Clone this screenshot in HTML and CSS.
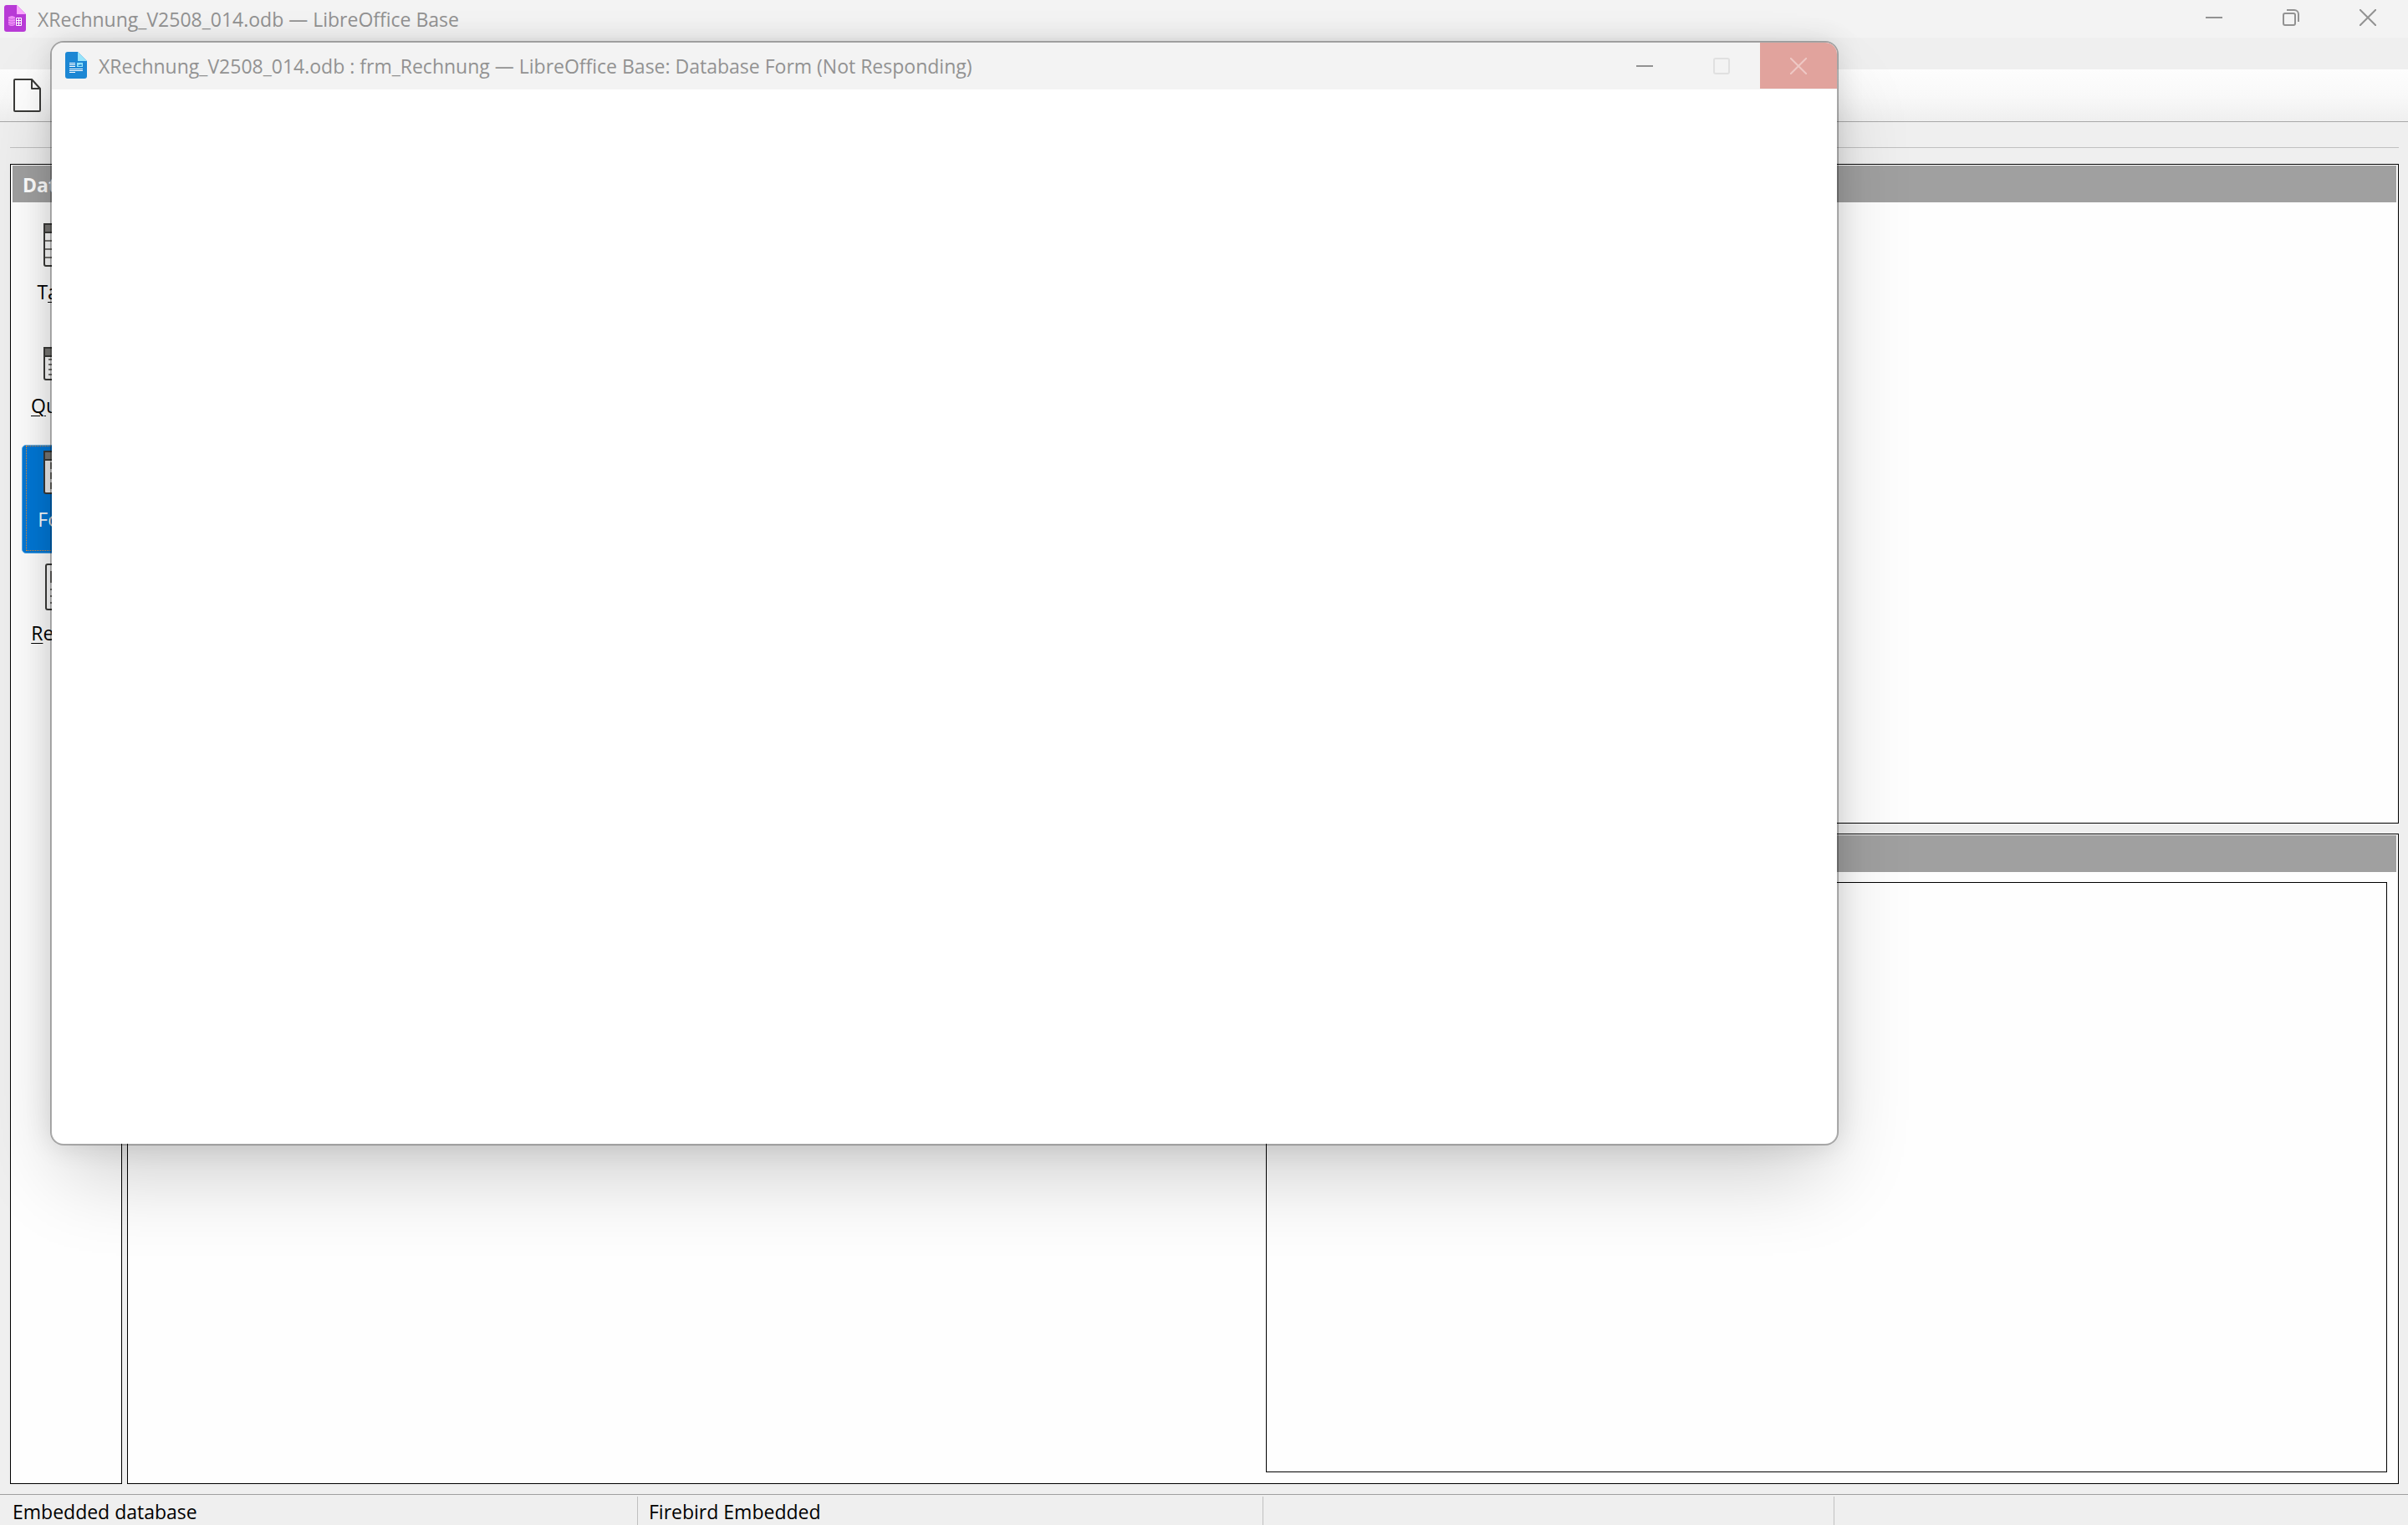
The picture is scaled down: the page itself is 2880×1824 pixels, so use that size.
FILE: index.html
```html
<!DOCTYPE html>
<html lang="en">
<head>
<meta charset="utf-8">
<title>XRechnung_V2508_014.odb — LibreOffice Base</title>
<link rel="stylesheet" href="styles.css">
</head>
<body>
<div class="app">
  <header class="titlebar">
    <svg class="doc-icon" viewBox="0 0 26 32" aria-hidden="true">
      <path fill="#b83ad6" d="M3 0h12l11 11v18a3 3 0 0 1-3 3H3a3 3 0 0 1-3-3V3a3 3 0 0 1 3-3z"/>
      <path fill="#fba6ff" d="M15 0l11 11H15z"/>
      <path fill="#f18cf8" d="M5 14.500q4.500-3 8 0v9q-4 3-8 0z"/>
      <path fill="none" stroke="#c95fe0" d="M5 16.500q4 1.500 8 0M5 19.500q4 1.500 8 0M5 22.500q4 1.500 8 0"/>
      <path fill="none" stroke="#fff" d="M14.500 15.500h6v9h-6zM17.500 15.500v9M14.500 18.500h6M14.500 21.500h6"/>
    </svg>
    <h1 class="title">XRechnung_V2508_014.odb — LibreOffice Base</h1>
    <div class="controls">
      <button class="control" type="button" aria-label="Minimize"><svg viewBox="0 0 20 20"><path d="M0 10h20"/></svg></button>
      <button class="control" type="button" aria-label="Restore"><svg viewBox="0 0 20 20"><rect x="1" y="5" width="14" height="14" rx="2"/><path d="M5 1h9a5 5 0 0 1 5 5v9"/></svg></button>
      <button class="control" type="button" aria-label="Close"><svg viewBox="0 0 20 20"><path d="M0 0l20 20M20 0L0 20"/></svg></button>
    </div>
  </header>
  <div class="menubar"></div>
  <div class="toolbar">
    <button class="tool" type="button" aria-label="New">
      <svg viewBox="0 0 33 40"><path fill="#fdfdfd" stroke="#3a3a38" stroke-width="2" stroke-linejoin="round" d="M2 1h20l10 11v26a1 1 0 0 1-1 1H2a1 1 0 0 1-1-1V2a1 1 0 0 1 1-1zM22 1v11h10"/></svg>
    </button>
  </div>
  <hr class="rule">
  <main class="workspace">
    <nav class="panel sidebar" aria-label="Database">
      <h2 class="panel-head">Database</h2>
      <div class="objects">
        <button class="object" type="button"><span class="object-body">
          <svg class="object-icon" viewBox="0 0 54 52"><g fill="#fafafa" stroke="#3a3a38" stroke-width="2"><rect x="1" y="1" width="52" height="50" rx="2"/><path fill="#797774" d="M1 1h52v10H1z"/></g><path fill="none" stroke="#797774" stroke-width="2" d="M2 21h50M2 31h50M2 41h50M27 12v38"/></svg>
          <span class="object-label">T<u>a</u>bles</span></span></button>
        <button class="object" type="button"><span class="object-body">
          <svg class="object-icon" viewBox="0 0 54 52"><g fill="#fafafa" stroke="#3a3a38" stroke-width="2"><rect x="1" y="13" width="52" height="38" rx="2"/><path fill="#797774" d="M1 13h52v10H1z"/></g><path fill="none" stroke="#797774" stroke-width="2" d="M6 27h40M6 33h40M6 39h40M6 45h40"/></svg>
          <span class="object-label"><u>Q</u>ueries</span></span></button>
        <button class="object selected" type="button" aria-pressed="true"><span class="object-body">
          <svg class="object-icon" viewBox="0 0 54 52"><g fill="#ececec" stroke="#3a3a38" stroke-width="2"><rect x="1" y="1" width="52" height="50" rx="2"/><path fill="#797774" d="M1 1h52v10H1z"/></g><path fill="#797774" d="M8 14h12v8H8zM8 26h12v8H8zM8 38h12v8H8z"/></svg>
          <span class="object-label">Forms</span></span></button>
        <button class="object" type="button"><span class="object-body">
          <svg class="object-icon" viewBox="0 0 54 52"><rect x="3" y="0" width="48" height="54" rx="2" fill="#fafafa" stroke="#3a3a38" stroke-width="2"/><path fill="#797774" d="M8 8h12v14H8zM8 29h38v2H8zM8 37h38v2H8zM8 45h38v2H8z"/></svg>
          <span class="object-label"><u>R</u>eports</span></span></button>
      </div>
    </nav>
    <div class="content">
      <section class="panel tasks"><div class="panel-head"></div></section>
      <section class="panel forms">
        <div class="panel-head"></div>
        <div class="forms-body"><div class="preview"></div></div>
      </section>
    </div>
  </main>
  <footer class="statusbar">
    <span class="status status-kind">Embedded database</span>
    <span class="status status-engine">Firebird Embedded</span>
    <span class="status status-host"></span>
    <span class="status status-user"></span>
  </footer>

  <section class="form-window" role="dialog" aria-labelledby="form-title">
    <header class="form-titlebar">
      <svg class="doc-icon" viewBox="0 0 26 32" aria-hidden="true">
        <path fill="#1c87d4" d="M3 0h12l11 11v18a3 3 0 0 1-3 3H3a3 3 0 0 1-3-3V3a3 3 0 0 1 3-3z"/>
        <path fill="#96e4fb" d="M15 0l11 11H15z"/>
        <path fill="none" stroke="#fff" d="M5 13.500h7M5 15.500h7M5 17.500h7M5 20.500h16M5 22.500h16M5 24.500h7"/>
        <rect x="14" y="13" width="7" height="5" fill="#96e4fb"/>
        <path fill="#1c87d4" d="M15 17l2-2 1 1 1-2 1 3z"/>
      </svg>
      <h2 class="title" id="form-title">XRechnung_V2508_014.odb : frm_Rechnung — LibreOffice Base: Database Form (Not Responding)</h2>
      <div class="controls">
        <button class="control" type="button" aria-label="Minimize form"><svg viewBox="0 0 20 20"><path d="M0 10h20"/></svg></button>
        <button class="control" type="button" aria-label="Maximize form" disabled><svg viewBox="0 0 20 20"><rect x="1" y="1" width="18" height="18" rx="2"/></svg></button>
        <button class="control danger" type="button" aria-label="Close form"><svg viewBox="0 0 20 20"><path d="M0 0l20 20M20 0L0 20"/></svg></button>
      </div>
    </header>
  </section>
</div>
</body>
</html>
```
FILE: styles.css
```css
* {
  box-sizing: border-box;
}

body {
  margin: 0;
  background: #efefef;
  color: #000;
  font: 23px/32px "Open Sans", "Noto Sans", sans-serif;
}

button {
  padding: 0;
  border: 0;
  background: none;
  color: inherit;
  font: inherit;
}

.app {
  position: relative;
  display: flex;
  flex-direction: column;
  min-height: 100vh;
  overflow: hidden;
}

/* Title bars */
.titlebar,
.form-titlebar {
  display: flex;
  background: #f3f3f3;
  color: #929292;
}

.titlebar {
  height: 45px;
  padding: 0 2px 0 5px;
}

.doc-icon {
  flex: none;
  width: 26px;
  height: 32px;
  margin-top: 6px;
}

.title {
  flex: 1;
  margin: 7px 0 0 14px;
  font-size: 23px;
  font-weight: 400;
  line-height: 32px;
  white-space: nowrap;
}

.controls {
  display: flex;
}

.control {
  display: flex;
  align-items: center;
  justify-content: center;
  width: 92px;
  height: 42px;
}

.control svg {
  width: 20px;
  height: 20px;
  fill: none;
  stroke: #929292;
  stroke-width: 2;
}

.control:disabled svg {
  stroke: #e0e0e0;
}

/* Menu and toolbar */
.menubar {
  height: 38px;
}

.toolbar {
  height: 63px;
  padding: 11px 16px;
  border-bottom: 1px solid #a9a9a9;
  background: linear-gradient(#fdfdfd, #f9f9f9 50%, #efefef);
}

.tool {
  display: block;
  width: 33px;
  height: 40px;
}

.tool svg {
  display: block;
}

.rule {
  width: auto;
  height: 1px;
  margin: 30px 11px 0 12px;
  border: 0;
  background: #c0c0c0;
}

/* Panels */
.workspace {
  display: flex;
  flex: 1;
  gap: 6px;
  margin: 19px 11px 12px 12px;
}

.panel {
  display: flex;
  flex-direction: column;
  padding: 1px;
  border: 1px solid #000;
  background: #fefefe;
}

.panel-head {
  flex: none;
  height: 44px;
  margin: 0 1px;
  padding: 7px 12px;
  overflow: hidden;
  background: #a0a0a0;
  color: #fff;
  font-size: 23px;
  line-height: 32px;
}

.sidebar {
  flex: none;
  width: 134px;
}

.objects {
  display: flex;
  flex-direction: column;
  gap: 6px;
  padding: 18px 12px;
}

.object {
  display: flex;
  height: 130px;
  padding: 0 4px 2px;
  border: 1px solid transparent;
  border-radius: 5px;
}

.object-body {
  display: flex;
  flex: 1;
  flex-direction: column;
  align-items: center;
  align-self: stretch;
  gap: 14px;
  padding-top: 5px;
  border: 1px dotted transparent;
}

.object-icon {
  flex: none;
  width: 54px;
  height: 52px;
  overflow: visible;
}

.object-label u {
  text-decoration-thickness: 1px;
  text-underline-offset: 3px;
}

.selected {
  border-color: #5aa9e6;
  background: #0078d7;
  color: #fff;
}

.selected .object-body {
  border-color: #f08a2c;
}

.content {
  display: flex;
  flex: 1;
  flex-direction: column;
  gap: 12px;
}

.tasks {
  flex: 789 0 0;
}

.forms {
  flex: 778 0 0;
}

.forms-body {
  display: flex;
  flex: 1;
  justify-content: flex-end;
  padding: 12px;
}

.preview {
  width: calc(50% - 3px);
  border: 1px solid #000;
}

/* Status bar */
.statusbar {
  display: grid;
  grid-template-columns: 747fr 748fr 683fr 687fr;
  height: 37px;
  padding: 2px 0 0 15px;
  border-top: 1px solid #a0a0a0;
}

.status {
  padding-top: 2px;
}

.status + .status {
  padding-left: 13px;
  border-left: 1px solid #c0c0c0;
}

/* Floating form window */
.form-window {
  position: absolute;
  inset: 49px 681px 454px 60px;
  overflow: hidden;
  border: 2px solid rgba(0, 0, 0, 0.3);
  border-radius: 16px;
  background: #fff padding-box;
  box-shadow:
    0 48px 96px -16px rgba(0, 0, 0, 0.2),
    0 0 32px rgba(0, 0, 0, 0.12);
}

.form-titlebar {
  height: 56px;
  padding-left: 16px;
}

.form-titlebar .doc-icon {
  margin-top: 11px;
}

.form-titlebar .title {
  margin-top: 12px;
}

.form-titlebar .control {
  height: 55px;
}

.danger {
  background: #e1a39d;
}

.danger svg {
  stroke: #eec8c4;
}
```
